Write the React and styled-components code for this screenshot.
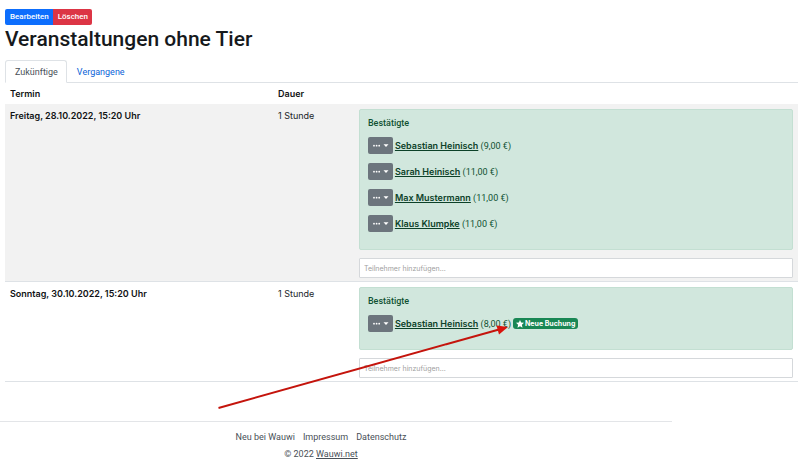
import React from "react";
import styled, { createGlobalStyle } from "styled-components";

const strongFont = 'Inter, "Liberation Sans", sans-serif';

const GlobalStyle = createGlobalStyle`
  *, *::before, *::after { box-sizing: border-box; }
  body {
    margin: 0;
    background: #fff;
    color: #212529;
    font-family: Roboto, "Liberation Sans", sans-serif;
    font-size: 9px;
    line-height: 13px;
  }
  button, input { font-family: inherit; margin: 0; }
`;

const Page = styled.div`
  position: relative;
`;

const Main = styled.main`
  padding: 9px 2px 0 5px;
`;

const ButtonGroup = styled.div`
  display: flex;
`;

const ActionButton = styled.button`
  height: 16px;
  padding: 0 4px 0 5px;
  border: 0;
  border-radius: ${(p) => (p.$danger ? "0 2px 2px 0" : "2px 0 0 2px")};
  background: ${(p) => (p.$danger ? "#dc3545" : "#0d6efd")};
  color: #fff;
  font-size: 8px;
  font-weight: 500;
  line-height: 16px;
`;

const Title = styled.h1`
  margin: 0 0 6px;
  color: #16191c;
  font-size: 21px;
  font-weight: 500;
  line-height: 29px;
`;

const Tabs = styled.nav`
  display: flex;
  border-bottom: 1px solid #dee2e6;
`;

const Tab = styled.a`
  height: 23px;
  margin-bottom: -1px;
  padding: 0 8px 0 9px;
  border: 1px solid ${(p) => (p.$active ? "#dee2e6" : "transparent")};
  border-bottom-color: ${(p) => (p.$active ? "#fff" : "transparent")};
  border-radius: 3px 3px 0 0;
  background: ${(p) => (p.$active ? "#fff" : "transparent")};
  color: ${(p) => (p.$active ? "#495057" : "#0a63d8")};
  line-height: 22px;
  text-decoration: none;
`;

const Table = styled.table`
  width: 100%;
  border-collapse: separate;
  border-spacing: 0;
  table-layout: fixed;
`;

const Col = styled.col`
  width: ${(p) => p.$width};
`;

const HeadCell = styled.th`
  height: 21px;
  padding: 0 5px;
  font-family: ${strongFont};
  font-weight: 600;
  text-align: left;
  color: #101214;
`;

const Row = styled.tr`
  background: ${(p) => (p.$striped ? "#f2f2f2" : "#fff")};
`;

const Cell = styled.td`
  padding: 5px 5px 3px;
  border-bottom: 1px solid #dee2e6;
  vertical-align: top;
`;

const DurationCell = styled(Cell)`
  font-family: ${strongFont};
`;

const DateCell = styled(Cell).attrs({ as: "th", scope: "row" })`
  color: #101214;
  font-family: ${strongFont};
  font-weight: 600;
  text-align: left;
`;

const Alert = styled.section`
  margin-bottom: 8px;
  padding: 7px 8px 17px;
  border: 1px solid #c3dfd2;
  border-radius: 2px;
  background: #d1e7dd;
  color: #0f5132;
`;

const AlertTitle = styled.h2`
  margin: 0 0 7px;
  font-size: 9px;
  font-weight: 500;
  line-height: 13px;
`;

const Bookings = styled.ul`
  display: grid;
  gap: 9px;
  margin: 0;
  padding: 0;
  list-style: none;
`;

const Booking = styled.li`
  display: flex;
  align-items: center;
  height: 17px;
`;

const MenuButton = styled.button`
  display: flex;
  align-items: center;
  justify-content: center;
  width: 25px;
  height: 17px;
  margin-right: 2px;
  padding: 0;
  border: 0;
  border-radius: 2px;
  background: #6c757d;
  color: #fff;
`;

const Person = styled.a`
  color: #0c4128;
  font-family: ${strongFont};
  font-weight: 600;
`;

const Badge = styled.span`
  display: flex;
  align-items: center;
  gap: 1px;
  height: 11px;
  margin-left: 2px;
  padding: 0 3px;
  border-radius: 3px;
  background: #198754;
  color: #fff;
  font-family: ${strongFont};
  font-size: 7px;
  font-weight: 700;
  line-height: 11px;
`;

const AddInput = styled.input`
  display: block;
  width: 100%;
  height: 20px;
  padding: 0 4px;
  border: 1px solid #d5d8db;
  border-radius: 1px;
  background: #fff;
  color: #212529;
  font-family: ${strongFont};
  font-size: 7px;
  &::placeholder { color: #a0a0a0; opacity: 1; }
`;

const Footer = styled.footer`
  width: 84%;
  margin-top: 39px;
  padding: 9px 30px 12px 0;
  border-top: 1px solid #e3e5e8;
  color: #495057;
  text-align: center;
`;

const FooterLinks = styled.nav`
  display: flex;
  justify-content: center;
  gap: 8px;
  margin-bottom: 4px;
`;

const FooterLink = styled.a`
  color: #495057;
  text-decoration: ${(p) => (p.$underlined ? "underline" : "none")};
`;

const Copyright = styled.p`
  margin: 0;
`;

const ArrowOverlay = styled.svg`
  position: absolute;
  left: 218px;
  top: 322px;
  pointer-events: none;
`;

const MenuIcon = () => (
  <svg width="17" height="9" viewBox="0 0 17 9" fill="currentColor" aria-hidden="true">
    <circle cx="2" cy="4.7" r="0.9" />
    <circle cx="4.6" cy="4.7" r="0.9" />
    <circle cx="7.2" cy="4.7" r="0.9" />
    <path d="M11.5 3.300h5L14 6z" />
  </svg>
);

const StarIcon = () => (
  <svg width="8" height="8" viewBox="0 0 16 16" fill="currentColor" aria-hidden="true">
    <path d="M8 0l2.300 5 5.700.700-4.200 3.800 1.200 5.800L8 12.600 3 15.300l1.200-5.800L0 5.700 5.700 5z" />
  </svg>
);

const events = [
  {
    date: "Freitag, 28.10.2022, 15:20 Uhr",
    duration: "1 Stunde",
    bookings: [
      { name: "Sebastian Heinisch", price: "(9,00 €)" },
      { name: "Sarah Heinisch", price: "(11,00 €)" },
      { name: "Max Mustermann", price: "(11,00 €)" },
      { name: "Klaus Klumpke", price: "(11,00 €)" },
    ],
  },
  {
    date: "Sonntag, 30.10.2022, 15:20 Uhr",
    duration: "1 Stunde",
    bookings: [{ name: "Sebastian Heinisch", price: "(8,00 €)", isNew: true }],
  },
];

export default function App() {
  return (
    <Page>
      <GlobalStyle />
      <Main>
        <ButtonGroup>
          <ActionButton type="button">Bearbeiten</ActionButton>
          <ActionButton type="button" $danger>Löschen</ActionButton>
        </ButtonGroup>
        <Title>Veranstaltungen ohne Tier</Title>
        <Tabs>
          <Tab href="#upcoming" $active aria-current="page">Zukünftige</Tab>
          <Tab href="#past">Vergangene</Tab>
        </Tabs>
        <Table>
          <colgroup>
            <Col $width="33.8%" />
            <Col $width="10.2%" />
            <Col $width="56%" />
          </colgroup>
          <thead>
            <tr>
              <HeadCell scope="col">Termin</HeadCell>
              <HeadCell scope="col">Dauer</HeadCell>
              <HeadCell scope="col" />
            </tr>
          </thead>
          <tbody>
            {events.map((event, index) => (
              <Row key={event.date} $striped={index % 2 === 0}>
                <DateCell>{event.date}</DateCell>
                <DurationCell>{event.duration}</DurationCell>
                <Cell>
                  <Alert>
                    <AlertTitle>Bestätigte</AlertTitle>
                    <Bookings>
                      {event.bookings.map((b) => (
                        <Booking key={b.name}>
                          <MenuButton type="button" aria-label={b.name} aria-haspopup="menu">
                            <MenuIcon />
                          </MenuButton>
                          <span>
                            <Person href="#person">{b.name}</Person> {b.price}
                          </span>
                          {b.isNew && (
                            <Badge>
                              <StarIcon />
                              Neue Buchung
                            </Badge>
                          )}
                        </Booking>
                      ))}
                    </Bookings>
                  </Alert>
                  <AddInput
                    type="text"
                    aria-label="Teilnehmer hinzufügen"
                    placeholder="Teilnehmer hinzufügen..."
                  />
                </Cell>
              </Row>
            ))}
          </tbody>
        </Table>
      </Main>
      <Footer>
        <FooterLinks>
          <FooterLink href="#new">Neu bei Wauwi</FooterLink>
          <FooterLink href="#imprint">Impressum</FooterLink>
          <FooterLink href="#privacy">Datenschutz</FooterLink>
        </FooterLinks>
        <Copyright>
          © 2022 <FooterLink href="#home" $underlined>Wauwi.net</FooterLink>
        </Copyright>
      </Footer>
      <ArrowOverlay width="292" height="88" viewBox="0 0 292 88" aria-hidden="true">
        <path d="M0.500 86L281 7.500" stroke="#c4140c" strokeWidth="2" fill="none" />
        <path d="M290 5L278.500 3.500 281 12.500z" fill="#d9140c" />
      </ArrowOverlay>
    </Page>
  );
}
